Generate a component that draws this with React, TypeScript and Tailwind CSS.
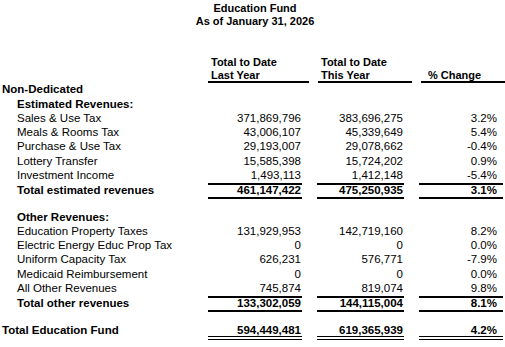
import React from "react";

type RowProps = {
  label: string;
  a?: string;
  b?: string;
  c?: string;
  indent?: boolean;
  bold?: boolean;
  total?: boolean;
  grand?: boolean;
};

function Cell({ v, total, grand, mr, pr }: { v: string; total?: boolean; grand?: boolean; mr: string; pr: string }) {
  return (
    <div className={`${mr} h-full relative`}>
      <div
        className={`h-full flex items-center justify-end ${pr} ${
          total ? "border-t-2 border-b-2 border-black" : ""
        }`}
      >
        {v}
      </div>
      {grand ? (
        <div className="absolute left-0 right-0 bottom-[-2px] h-[4px] border-t border-b border-black" />
      ) : null}
    </div>
  );
}

function Row({ label, a = "", b = "", c = "", indent, bold, total, grand }: RowProps) {
  return (
    <div
      className={`flex ${total ? "h-[16px]" : "h-[14.25px]"} items-center leading-none ${
        bold ? "font-bold" : ""
      }`}
    >
      <div className={`w-[208px] shrink-0 whitespace-nowrap ${indent ? "pl-[17px]" : "pl-[2px]"}`}>{label}</div>
      <div className="w-[101px] shrink-0 h-full">
        <Cell v={a} total={total} grand={grand} mr="mr-[7px]" pr="pr-[1px]" />
      </div>
      <div className="w-[8px] shrink-0" />
      <div className="w-[95px] shrink-0 h-full">
        <Cell v={b} total={total} grand={grand} mr="mr-[8px]" pr="pr-[1px]" />
      </div>
      <div className="w-[7px] shrink-0" />
      <div className="w-[86px] shrink-0 h-full">
        <Cell v={c} total={total} grand={grand} mr="mr-[2px]" pr="pr-[6px]" />
      </div>
    </div>
  );
}

function Blank({ h }: { h: string }) {
  return <div className={h} />;
}

export default function App() {
  return (
    <div
      className="w-[505px] h-[347px] bg-white text-black text-[11.5px] overflow-hidden"
      style={{ fontFamily: '"Liberation Sans", Arial, sans-serif' }}
    >
      <div className="pt-[2px] pl-[5px] font-bold text-center leading-none text-[11px]">
        <div className="h-[13px] flex items-center justify-center">Education Fund</div>
        <div className="h-[13px] flex items-center justify-center">As of January 31, 2026</div>
      </div>
      <div className="h-[27px]" />
      <div className="flex font-bold leading-none text-[11px]">
        <div className="w-[208px] shrink-0" />
        <div className="w-[101px] shrink-0">
          <div className="h-[15px] flex items-center pl-[3px]">Total to Date</div>
          <div className="h-[13px] flex items-center pl-[3px] border-b-2 border-black">Last Year</div>
        </div>
        <div className="w-[9px] shrink-0" />
        <div className="w-[94px] shrink-0">
          <div className="h-[15px] flex items-center pl-[3px]">Total to Date</div>
          <div className="h-[13px] flex items-center pl-[3px] border-b-2 border-black">This Year</div>
        </div>
        <div className="w-[9px] shrink-0" />
        <div className="w-[84px] shrink-0">
          <div className="h-[15px]" />
          <div className="h-[13px] flex items-center pl-[7px] border-b-2 border-black">% Change</div>
        </div>
      </div>
      <Row label="Non-Dedicated" bold />
      <Row label="Estimated Revenues:" indent bold />
      <Row label="Sales & Use Tax" indent a="371,869,796" b="383,696,275" c="3.2%" />
      <Row label="Meals & Rooms Tax" indent a="43,006,107" b="45,339,649" c="5.4%" />
      <Row label="Purchase & Use Tax" indent a="29,193,007" b="29,078,662" c="-0.4%" />
      <Row label="Lottery Transfer" indent a="15,585,398" b="15,724,202" c="0.9%" />
      <Row label="Investment Income" indent a="1,493,113" b="1,412,148" c="-5.4%" />
      <Row label="Total estimated revenues" indent bold total a="461,147,422" b="475,250,935" c="3.1%" />
      <Blank h="h-[11.5px]" />
      <Row label="Other Revenues:" indent bold />
      <Row label="Education Property Taxes" indent a="131,929,953" b="142,719,160" c="8.2%" />
      <Row label="Electric Energy Educ Prop Tax" indent a="0" b="0" c="0.0%" />
      <Row label="Uniform Capacity Tax" indent a="626,231" b="576,771" c="-7.9%" />
      <Row label="Medicaid Reimbursement" indent a="0" b="0" c="0.0%" />
      <Row label="All Other Revenues" indent a="745,874" b="819,074" c="9.8%" />
      <Row label="Total other revenues" indent bold total a="133,302,059" b="144,115,004" c="8.1%" />
      <Blank h="h-[11.5px]" />
      <Row label="Total Education Fund" bold grand a="594,449,481" b="619,365,939" c="4.2%" />
    </div>
  );
}
